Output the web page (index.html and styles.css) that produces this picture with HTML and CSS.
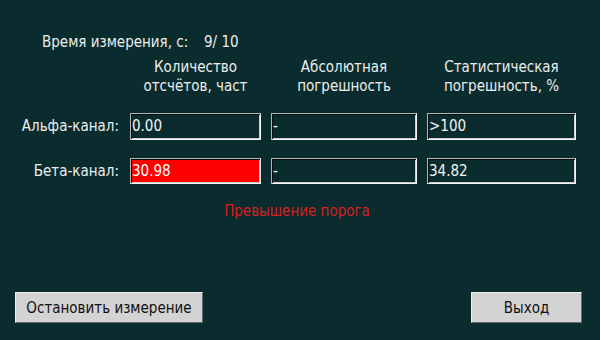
FILE: index.html
```html
<!DOCTYPE html>
<html lang="ru">
<head>
<meta charset="utf-8">
<title>Измерение</title>
<link rel="stylesheet" href="styles.css">
</head>
<body>
<div class="screen">
  <div class="title"><span class="title-label">Время измерения, с:</span><span class="title-value">9/ 10</span></div>
  <div class="grid">
    <div class="cell"></div>
    <div class="head">Количество<br>отсчётов, част</div>
    <div class="head">Абсолютная<br>погрешность</div>
    <div class="head">Статистическая<br>погрешность, %</div>

    <div class="label row-a">Альфа-канал:</div>
    <div class="field row-a">0.00</div>
    <div class="field row-a">-</div>
    <div class="field row-a">&gt;100</div>

    <div class="label row-b">Бета-канал:</div>
    <div class="field row-b alarm">30.98</div>
    <div class="field row-b">-</div>
    <div class="field row-b">34.82</div>
  </div>
  <div class="warning">Превышение порога</div>
  <div class="footer">
    <button class="btn btn-stop">Остановить измерение</button>
    <button class="btn btn-exit">Выход</button>
  </div>
</div>
</body>
</html>
```
FILE: styles.css
```css
html, body {
  margin: 0;
  padding: 0;
}
body {
  background: #0b2c2e;
  font-family: "DejaVu Sans Condensed", "DejaVu Sans", sans-serif;
  font-stretch: condensed;
  font-size: 15px;
  color: #ececec;
}
.screen {
  width: 600px;
  height: 340px;
  box-sizing: border-box;
  display: flex;
  flex-direction: column;
  padding-top: 33px;
}
.title {
  padding-left: 42px;
  line-height: 18px;
  height: 18px;
  display: flex;
}
.title-label {
  width: 162px;
}
.grid {
  margin-top: 7px;
  display: grid;
  grid-template-columns: 120px 131px 146px 149px;
  column-gap: 10px;
}
.head {
  text-align: center;
  line-height: 19px;
  height: 40px;
  margin-bottom: 15px;
}
.label {
  text-align: right;
  padding-right: 1px;
  line-height: 27px;
}
.row-a {
  height: 27px;
}
.row-b {
  height: 26px;
  margin-top: 18px;
}
.field {
  box-sizing: border-box;
  border: 1px solid #b4b4b4;
  border-right-color: #f4f4f4;
  border-bottom-color: #f4f4f4;
  box-shadow: inset 1px 1px 0 #050f10, inset -1px -1px 0 #cfcfcf;
  padding-left: 1px;
  color: #f4f4f4;
  line-height: 25px;
  white-space: nowrap;
}
.row-b.field {
  line-height: 24px;
}
.field.alarm {
  background: #ff0000;
  color: #ffffff;
}
.warning {
  margin-top: 18px;
  text-align: center;
  padding-right: 6px;
  color: #d81e1e;
  line-height: 18px;
}
.footer {
  margin-top: auto;
  padding: 0 18px 17px 15px;
  display: flex;
  justify-content: space-between;
}
.btn {
  height: 31px;
  background: #d3d3d3;
  color: #101010;
  font-family: "DejaVu Sans Condensed", "DejaVu Sans", sans-serif;
  font-stretch: condensed;
  font-size: 15px;
  border: 1px solid #6a6a6a;
  border-top-color: #f0f0f0;
  border-left-color: #f0f0f0;
  padding: 0;
  margin: 0;
}
.btn-stop {
  width: 188px;
}
.btn-exit {
  width: 111px;
}
```
